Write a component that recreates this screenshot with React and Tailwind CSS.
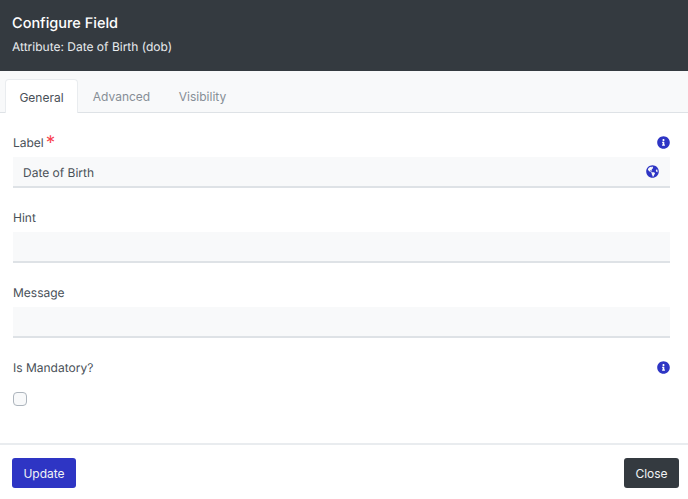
import { FaInfoCircle, FaGlobeAmericas } from "react-icons/fa";

function Field({ label, required, info, value, globe }) {
  return (
    <div className="h-[75px]">
      <div className="flex h-[29px] items-start justify-between">
        <label className="mt-[1px] text-[12px] leading-[28px] text-[#495057]">
          {label}
          {required && <span className="relative top-[2px] ml-[2px] text-[19px] leading-none text-[#f8434f]">*</span>}
        </label>
        {info && <FaInfoCircle className="mt-[8px] text-[13px] text-[#2e35c4]" />}
      </div>
      <div className="flex h-[31px] w-[657px] items-center justify-between border-b-2 border-[#dee2e6] bg-[#f8f9fa] pt-[3px] pr-[11px] pl-[10px]">
        <span className="text-[12px] text-[#495057]">{value}</span>
        {globe && <FaGlobeAmericas className="mt-[-3px] text-[13px] text-[#2e35c4]" />}
      </div>
    </div>
  );
}

export default function App() {
  return (
    <div className="flex h-[499px] w-[688px] flex-col bg-white font-['Inter',sans-serif] [text-rendering:geometricPrecision]">
      <header className="h-[71px] bg-[#343a40] pt-[13px] pl-[12px] text-white">
        <h1 className="text-[14.5px] leading-[22px] font-medium">Configure Field</h1>
        <p className="mt-[1px] text-[12px] leading-[22px] text-[#e9ecef]">Attribute: Date of Birth (dob)</p>
      </header>

      <nav className="flex h-[42px] items-end border-b border-[#dee2e6] bg-[#f8f9fa] pl-[5px] text-[12px]">
        <button className="relative top-[1px] h-[34px] w-[73px] rounded-t-[4px] border border-b-0 border-[#e9ecef] bg-white pt-[2px] text-[#495057]">General</button>
        <button className="h-[34px] w-[87px] pt-[4px] text-[#868e96]">Advanced</button>
        <button className="h-[34px] w-[75px] pt-[4px] text-[#868e96]">Visibility</button>
      </nav>

      <main className="flex-1 pt-[15px] pl-[13px] pr-[18px]">
        <Field label="Label" required info value="Date of Birth" globe />
        <Field label="Hint" />
        <Field label="Message" />
        <div className="flex h-[29px] items-start justify-between">
          <label className="mt-[1px] text-[12px] leading-[28px] text-[#495057]">Is Mandatory?</label>
          <FaInfoCircle className="mt-[8px] text-[13px] text-[#2e35c4]" />
        </div>
        <input type="checkbox" className="mt-[10px] block h-[14px] w-[14px] appearance-none rounded-[4px] border border-[#adb5bd] bg-[#f8f9fa]" />
      </main>

      <footer className="flex h-[56px] items-start justify-between border-t-2 border-[#e9ecef] pt-[13px] pr-[9px] pl-[12px] text-[12px]">
        <button className="h-[30px] w-[64px] rounded-[3px] bg-[#2e35c4] pt-[2px] text-[#f1f3f5]">Update</button>
        <button className="h-[30px] w-[55px] rounded-[3px] bg-[#343a40] pt-[2px] text-[#f1f3f5]">Close</button>
      </footer>
    </div>
  );
}
